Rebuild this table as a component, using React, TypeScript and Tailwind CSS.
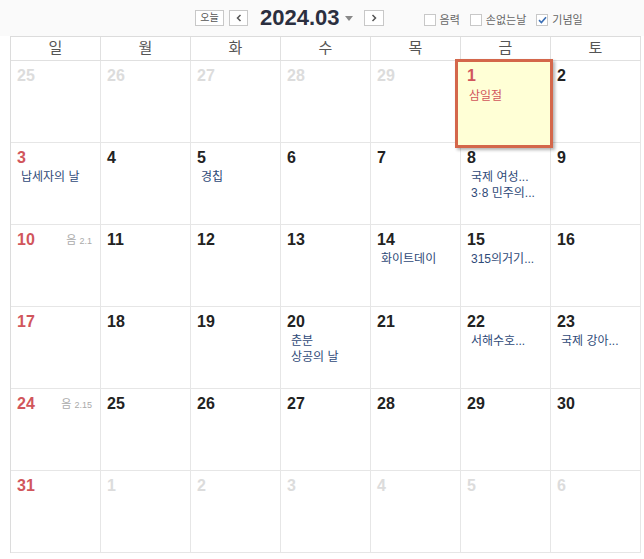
import React from 'react';

type Day = {
  n: number;
  out?: boolean;
  events?: string[];
  lunar?: string;
  holiday?: boolean;
};

const DAY_NAMES = ['일', '월', '화', '수', '목', '금', '토'];

const WEEKS: Day[][] = [
  [
    { n: 25, out: true },
    { n: 26, out: true },
    { n: 27, out: true },
    { n: 28, out: true },
    { n: 29, out: true },
    { n: 1, holiday: true, events: ['삼일절'] },
    { n: 2 },
  ],
  [
    { n: 3, events: ['납세자의 날'] },
    { n: 4 },
    { n: 5, events: ['경칩'] },
    { n: 6 },
    { n: 7 },
    { n: 8, events: ['국제 여성...', '3·8 민주의...'] },
    { n: 9 },
  ],
  [
    { n: 10, lunar: '2.1' },
    { n: 11 },
    { n: 12 },
    { n: 13 },
    { n: 14, events: ['화이트데이'] },
    { n: 15, events: ['315의거기...'] },
    { n: 16 },
  ],
  [
    { n: 17 },
    { n: 18 },
    { n: 19 },
    { n: 20, events: ['춘분', '상공의 날'] },
    { n: 21 },
    { n: 22, events: ['서해수호...'] },
    { n: 23, events: ['국제 강아...'] },
  ],
  [
    { n: 24, lunar: '2.15' },
    { n: 25 },
    { n: 26 },
    { n: 27 },
    { n: 28 },
    { n: 29 },
    { n: 30 },
  ],
  [
    { n: 31 },
    { n: 1, out: true },
    { n: 2, out: true },
    { n: 3, out: true },
    { n: 4, out: true },
    { n: 5, out: true },
    { n: 6, out: true },
  ],
];

const Checkbox = ({ label, checked }: { label: string; checked?: boolean }) => (
  <label className="flex items-center gap-[4px]">
    <span className="w-[12px] h-[12px] border border-[#c8c8c8] bg-white flex items-center justify-center">
      {checked && (
        <svg width="9" height="8" viewBox="0 0 9 8">
          <path d="M1 4.2 L3.4 6.5 L8 1.2" fill="none" stroke="#3b6fb5" strokeWidth="1.6" />
        </svg>
      )}
    </span>
    <span className="text-[11px] text-[#666]">{label}</span>
  </label>
);

const DayCell = ({ day, col }: { day: Day; col: number }) => {
  const numColor = day.out
    ? 'text-[#dcdcdc]'
    : col === 0
    ? 'text-[#d1565c]'
    : 'text-[#222]';

  return (
    <div className="relative h-[82px] border-r border-b border-[#e6e6e6] pl-[6px] pt-[6px]">
      {day.holiday ? (
        // 오늘 강조 박스 (셀 밖으로 살짝 넘침)
        <div className="absolute left-[-6px] top-[-2px] w-[98px] h-[89px] z-10 border-[3px] border-[#d4674b] bg-[#ffffd6] shadow-[2px_2px_3px_rgba(0,0,0,0.3)] pl-[9px] pt-[5px]">
          <div className="text-[16px] font-bold leading-[18px] text-[#d1565c]">{day.n}</div>
          {day.events?.map((e) => (
            <div key={e} className="mt-[3px] pl-[2px] text-[12px] leading-[16px] text-[#d1565c]">{e}</div>
          ))}
        </div>
      ) : (
        <>
          <div className="flex items-center justify-between pr-[8px]">
            <span className={`text-[16px] font-bold leading-[18px] ${numColor}`}>{day.n}</span>
            {day.lunar && (
              <span className="text-[#aaa] text-[11px] leading-[14px]">
                음 <span className="text-[9px]">{day.lunar}</span>
              </span>
            )}
          </div>
          {day.events && (
            <div className="mt-[2px] pl-[4px]">
              {day.events.map((e) => (
                <div key={e} className="text-[12px] leading-[16px] text-[#2f4a78] whitespace-nowrap">{e}</div>
              ))}
            </div>
          )}
        </>
      )}
    </div>
  );
};

export default function App() {
  return (
    <div
      className="w-[644px] h-[559px] bg-white overflow-hidden"
      style={{ fontFamily: "'Liberation Sans', 'Noto Sans CJK KR', sans-serif" }}
    >
      {/* 상단 툴바 */}
      <div className="h-[36px] bg-[#fafafa] flex items-center">
        <div className="flex items-center ml-[195px]">
          <button className="w-[29px] h-[16px] border border-[#c8c8c8] bg-white text-[10px] leading-[14px] text-[#555]">오늘</button>
          <button className="ml-[5px] w-[19px] h-[16px] border border-[#c8c8c8] bg-white flex items-center justify-center">
            <svg width="6" height="8" viewBox="0 0 6 8"><path d="M4.5 1 L1.5 4 L4.5 7" fill="none" stroke="#555" strokeWidth="1.5" /></svg>
          </button>
          <span className="ml-[12px] text-[22px] font-bold text-[#2b2f3f] leading-[26px]">2024.03</span>
          <svg className="ml-[5px]" width="8" height="5" viewBox="0 0 8 5"><path d="M0 0 L8 0 L4 5 Z" fill="#888" /></svg>
          <button className="ml-[11px] w-[20px] h-[16px] border border-[#c8c8c8] bg-white flex items-center justify-center">
            <svg width="6" height="8" viewBox="0 0 6 8"><path d="M1.5 1 L4.5 4 L1.5 7" fill="none" stroke="#555" strokeWidth="1.5" /></svg>
          </button>
        </div>
        <div className="flex items-center gap-[10px] ml-[40px] mt-[4px]">
          <Checkbox label="음력" />
          <Checkbox label="손없는날" />
          <Checkbox label="기념일" checked />
        </div>
      </div>

      {/* 달력 */}
      <div className="ml-[10px] w-[631px] border-l border-t border-[#dcdcdc]">
        <div className="grid grid-cols-7">
          {DAY_NAMES.map((d) => (
            <div key={d} className="h-[24px] border-r border-b border-[#e0e0e0] flex items-center justify-center text-[15px] text-[#555]">
              {d}
            </div>
          ))}
        </div>
        {WEEKS.map((week, wi) => (
          <div key={wi} className="grid grid-cols-7">
            {week.map((day, ci) => (
              <DayCell key={ci} day={day} col={ci} />
            ))}
          </div>
        ))}
      </div>
    </div>
  );
}
